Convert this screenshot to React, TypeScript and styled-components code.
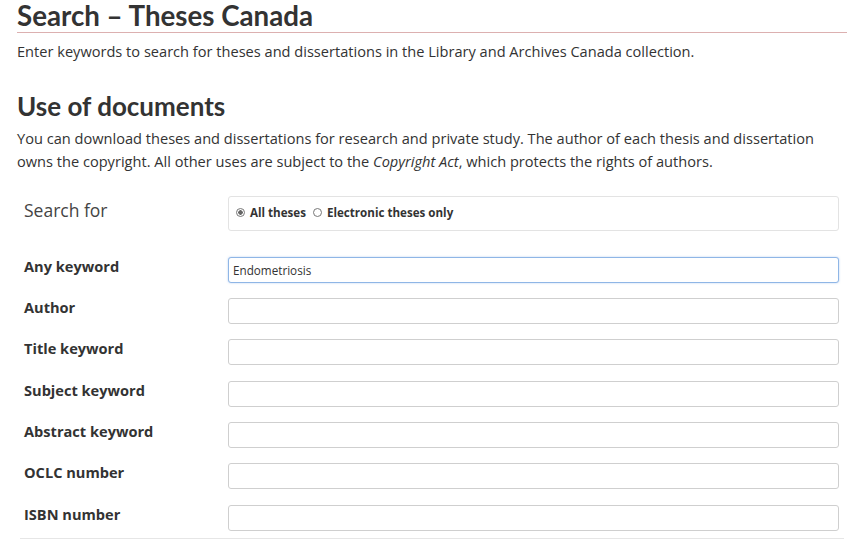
import styled, { createGlobalStyle } from 'styled-components';

const GlobalStyle = createGlobalStyle`
  body {
    margin: 0;
    background: #fff;
    color: #333;
    font-family: 'Open Sans', 'Noto Sans', sans-serif;
  }
`;

const FIELDS = [
  { label: 'Any keyword', value: 'Endometriosis', active: true },
  { label: 'Author' },
  { label: 'Title keyword' },
  { label: 'Subject keyword' },
  { label: 'Abstract keyword' },
  { label: 'OCLC number' },
  { label: 'ISBN number' },
];

const App = () => {
  return (
    <Page>
      <GlobalStyle />
      <Title>Search – Theses Canada</Title>
      <Intro>
        Enter keywords to search for theses and dissertations in the Library and Archives Canada collection.
      </Intro>
      <SubTitle>Use of documents</SubTitle>
      <Paragraph>
        You can download theses and dissertations for research and private study. The author of each thesis and
        dissertation owns the copyright. All other uses are subject to the <em>Copyright Act</em>, which protects the
        rights of authors.
      </Paragraph>
      <Form>
        <SearchForLabel>Search for</SearchForLabel>
        <RadioBox>
          <RadioOption>
            <RadioDot checked />
            All theses
          </RadioOption>
          <RadioOption>
            <RadioDot />
            Electronic theses only
          </RadioOption>
        </RadioBox>
        {FIELDS.map((f) => (
          <FieldRow key={f.label}>
            <FieldLabel>{f.label}</FieldLabel>
            <TextInput $active={!!f.active} defaultValue={f.value ?? ''} readOnly />
          </FieldRow>
        ))}
      </Form>
      <BottomRule />
    </Page>
  );
};

export default App;

const Page = styled.div`
  width: 830px;
  padding: 0 18px 0 17px;
`;

const Title = styled.h1`
  margin: 0;
  font-family: Lato, 'Noto Sans', sans-serif;
  font-weight: 700;
  font-size: 27.7px;
  line-height: 31px;
  color: #333;
  padding-bottom: 1px;
  border-bottom: 1px solid #dcb0b0;
`;

const Intro = styled.p`
  margin: 7px 0 0;
  font-size: 14.6px;
  line-height: 23px;
`;

const SubTitle = styled.h2`
  margin: 28px 0 0;
  font-family: Lato, 'Noto Sans', sans-serif;
  font-weight: 700;
  font-size: 26px;
  line-height: 30px;
  color: #333;
`;

const Paragraph = styled.p`
  margin: 6px 0 0;
  font-size: 14.6px;
  line-height: 23px;
`;

const Form = styled.div`
  display: grid;
  grid-template-columns: 204px 1fr;
  row-gap: 15.3px;
  padding-left: 7px;
  margin-top: 23px;
  width: 815px;
`;

const SearchForLabel = styled.div`
  padding-top: 2px;
  font-size: 17.5px;
  line-height: 24px;
  color: #444;
`;

const RadioBox = styled.div`
  display: flex;
  align-items: center;
  gap: 7px;
  height: 31px;
  padding: 0 7px 2px;
  margin-bottom: 10.5px;
  border: 1px solid #e3e3e3;
  border-radius: 3px;
`;

const RadioOption = styled.label`
  display: flex;
  align-items: center;
  gap: 5px;
  font-size: 11.6px;
  font-weight: 700;
  color: #333;
`;

const RadioDot = styled.span<{ checked?: boolean }>`
  box-sizing: border-box;
  width: 9px;
  height: 9px;
  border-radius: 50%;
  border: 1px solid #777;
  background: ${(p) => (p.checked ? 'radial-gradient(circle, #666 0 2px, #fff 2.5px)' : '#fff')};
`;

const FieldRow = styled.div`
  display: contents;
`;

const FieldLabel = styled.div`
  font-size: 14.6px;
  font-weight: 700;
  line-height: 20px;
  margin-top: -1px;
  color: #333;
`;

const TextInput = styled.input<{ $active: boolean }>`
  box-sizing: border-box;
  width: 100%;
  height: 26px;
  margin: 0;
  padding: 0 4px;
  font-family: 'Open Sans', 'Noto Sans', sans-serif;
  font-size: 11.7px;
  color: #333;
  background: #fff;
  border: 1px solid ${(p) => (p.$active ? '#8fb6e6' : '#cfcfcf')};
  border-radius: 3px;
  box-shadow: ${(p) => (p.$active ? '0 0 2px rgba(102, 153, 230, 0.5)' : 'none')};
  outline: none;
`;

const BottomRule = styled.div`
  margin: 7px 3px 0;
  border-top: 1px solid #e6e6e6;
`;
